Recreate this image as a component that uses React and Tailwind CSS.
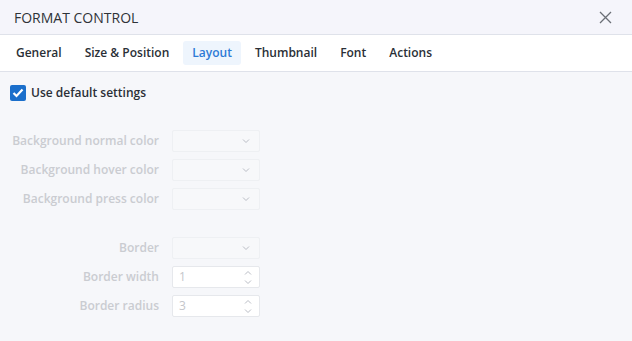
import React from "react";

const tabs = ["General", "Size & Position", "Layout", "Thumbnail", "Font", "Actions"];

function Chevron({ up }) {
  return (
    <svg width="8" height="5" viewBox="0 0 8 5" className="text-[#b9bcc4]">
      <path
        d={up ? "M1 4.5 L4 1.5 L7 4.5" : "M1 0.5 L4 3.5 L7 0.5"}
        fill="none"
        stroke="currentColor"
        strokeWidth="1"
      />
    </svg>
  );
}

function SelectBox() {
  return (
    <div className="w-[88px] h-[22px] border border-[#eef0f3] bg-[#f7f8fa] rounded-[2px] flex items-center justify-end pr-[9px]">
      <Chevron />
    </div>
  );
}

function NumberBox({ value }) {
  return (
    <div className="w-[88px] h-[22px] border border-[#e6e8ec] bg-white rounded-[2px] flex items-center pl-[6px] pr-[7px]">
      <span className="flex-1 text-[12px] text-[#c4c6cb]">{value}</span>
      <div className="flex flex-col gap-[5px]">
        <Chevron up />
        <Chevron />
      </div>
    </div>
  );
}

function Row({ label, children }) {
  return (
    <div className="flex items-center h-[22px]">
      <div className="w-[160px] pr-[1px] text-right text-[12px] font-semibold text-[#caccd1]">
        {label}
      </div>
      <div className="ml-[12px]">{children}</div>
    </div>
  );
}

export default function App() {
  return (
    <div
      className="w-[632px] h-[341px] bg-[#f6f7fa] flex flex-col overflow-hidden"
      style={{ fontFamily: "'Open Sans', sans-serif" }}
    >
      <div className="h-[35px] bg-[#f5f5fb] border-b border-[#dfe2ea] flex items-center justify-between pl-[14px] pr-[20px]">
        <span className="text-[14px] text-[#2f3338]">FORMAT CONTROL</span>
        <svg width="13" height="13" viewBox="0 0 13 13">
          <path d="M1 1 L12 12 M12 1 L1 12" stroke="#6b6f76" strokeWidth="1.3" />
        </svg>
      </div>
      <div className="h-[37px] bg-white border-b border-[#dfe2ea] flex items-center pl-[7px] gap-[5px]">
        {tabs.map((t) => (
          <div
            key={t}
            className={
              t === "Layout"
                ? "h-[24px] px-[9px] flex items-center rounded-[3px] bg-[#eef5fd] text-[12px] font-semibold text-[#2d7ad6]"
                : "h-[24px] px-[9px] flex items-center text-[12px] font-semibold text-[#2a2f36]"
            }
          >
            {t}
          </div>
        ))}
      </div>
      <div className="flex flex-col pt-[12px]">
        <div className="flex items-center pl-[10px] gap-[5px] h-[17px]">
          <div className="w-[16px] h-[16px] rounded-[2px] bg-[#1b6fcb] flex items-center justify-center">
            <svg width="12" height="10" viewBox="0 0 12 10">
              <path d="M1.5 5 L4.5 8 L10.5 1.5" fill="none" stroke="white" strokeWidth="2.2" />
            </svg>
          </div>
          <span className="text-[12px] font-semibold text-[#2a2f36]">Use default settings</span>
        </div>
        <div className="flex flex-col gap-[7px] mt-[29px]">
          <Row label="Background normal color"><SelectBox /></Row>
          <Row label="Background hover color"><SelectBox /></Row>
          <Row label="Background press color"><SelectBox /></Row>
        </div>
        <div className="flex flex-col gap-[7px] mt-[27px]">
          <Row label="Border"><SelectBox /></Row>
          <Row label="Border width"><NumberBox value="1" /></Row>
          <Row label="Border radius"><NumberBox value="3" /></Row>
        </div>
      </div>
    </div>
  );
}
